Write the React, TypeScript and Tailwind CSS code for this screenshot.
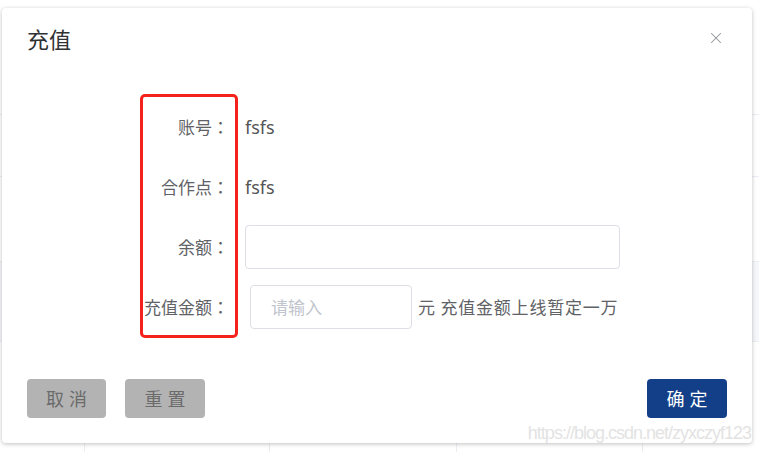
import { X } from "lucide-react";

const cjk = "font-['Microsoft_YaHei','Noto_Sans_CJK_SC','Noto_Sans',sans-serif]";

function Row({ label, children }: { label: string; children: React.ReactNode }) {
  return (
    <div className="flex items-center h-[44px]">
      <div className="w-[103px] text-right text-[17px] text-[#606266] shrink-0 font-['Noto_Sans_CJK_JP',sans-serif]">
        {label}
      </div>
      <div className="ml-[16px] flex items-center">{children}</div>
    </div>
  );
}

export default function App() {
  return (
    <div className={`relative w-[759px] h-[452px] bg-white overflow-hidden ${cjk}`}>
      {/* page behind the dialog */}
      <div className="absolute inset-0 flex flex-col">
        <div className="h-[115px] border-b border-[#ebeef5]" />
        <div className="h-[62px] border-b border-[#ebeef5]" />
        <div className="h-[85px] border-b border-[#ebeef5]" />
        <div className="h-[80px] bg-[#f5f7fa] border-b border-[#ebeef5]" />
        <div className="flex-1 flex">
          <div className="w-[85px] border-r border-[#ebeef5]" />
          <div className="w-[185px] border-r border-[#ebeef5]" />
          <div className="w-[187px] border-r border-[#ebeef5]" />
          <div className="w-[186px] border-r border-[#ebeef5]" />
        </div>
      </div>

      <div className="absolute left-[2px] top-[8px] w-[750px] h-[435px] bg-white rounded-[4px] shadow-[0_1px_4px_rgba(0,0,0,0.25)]">
        <div className="flex items-center justify-between pl-[25px] pr-[27px] pt-[17px]">
          <span className="text-[22px] leading-[26px] text-[#303133]">充值</span>
          <X className="size-[18px] text-[#909399]" strokeWidth={1.4} />
        </div>

        <div className="relative mt-[54px] ml-[124px] flex flex-col gap-[16px]">
          <Row label="账号：">
            <span className="text-[18px] text-[#555] font-['Noto_Sans',sans-serif]">fsfs</span>
          </Row>
          <Row label="合作点：">
            <span className="text-[18px] text-[#555] font-['Noto_Sans',sans-serif]">fsfs</span>
          </Row>
          <Row label="余额：">
            <div className="w-[375px] h-[44px] border border-[#dcdfe6] rounded-[4px]" />
          </Row>
          <Row label="充值金额：">
            <div className="ml-[5px] w-[162px] h-[44px] border border-[#dcdfe6] rounded-[4px] flex items-center px-[20px] text-[17px] text-[#c0c4cc]">
              请输入
            </div>
            <span className="ml-[6px] text-[17px] tracking-[0.8px] text-[#606266]">元 充值金额上线暂定一万</span>
          </Row>
          <div className="absolute left-[14px] top-[-11px] w-[98px] h-[244px] border-[3px] border-[#f5221b] rounded-[5px]" />
        </div>

        <div className="absolute left-[25px] right-[25px] top-[371px] flex items-center">
          <button className="w-[79px] h-[39px] rounded-[4px] bg-[#b3b3b3] text-[#6b6b6b] text-[18px] tracking-[5px] pl-[5px]">
            取消
          </button>
          <button className="ml-[19px] w-[80px] h-[39px] rounded-[4px] bg-[#b3b3b3] text-[#6b6b6b] text-[18px] tracking-[5px] pl-[5px]">
            重置
          </button>
          <button className="ml-auto w-[80px] h-[39px] rounded-[4px] bg-[#123f88] text-white text-[18px] tracking-[5px] pl-[5px]">
            确定
          </button>
        </div>
      </div>

      <div className="absolute right-[8px] top-[420px] text-[18px] text-[#e3e3e3] font-['Liberation_Sans',sans-serif] tracking-[-1px]">
        https://blog.csdn.net/zyxczyf123
      </div>
    </div>
  );
}
